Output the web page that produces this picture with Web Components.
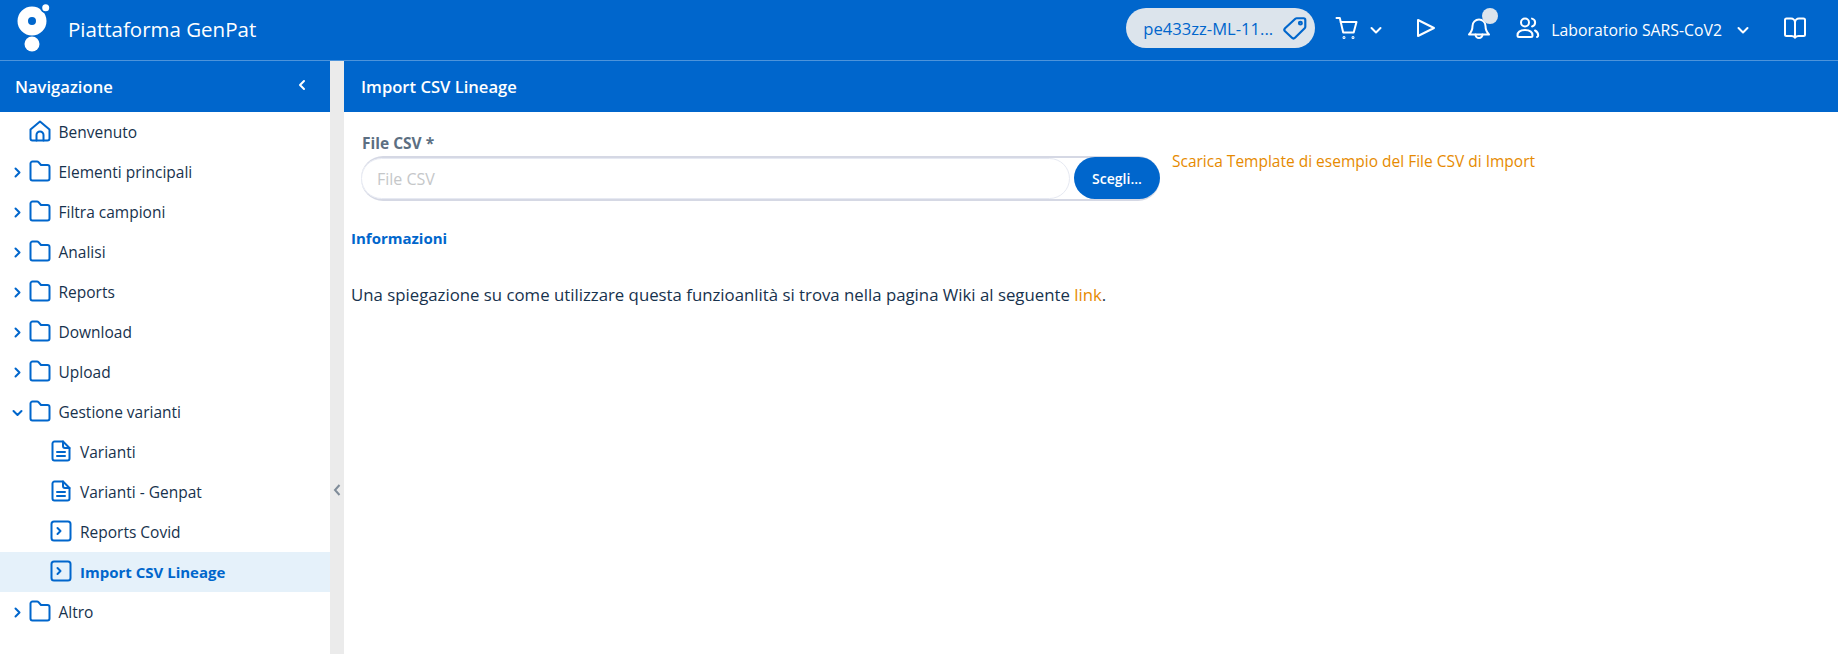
<!DOCTYPE html>
<html lang="it">
<head>
<meta charset="utf-8">
<title>Piattaforma GenPat</title>
<style>
    html, body { margin: 0; height: 100%; overflow: hidden; }
    body { font-family: "Open Sans", "Noto Sans", sans-serif; color: #17324d; }
    gp-app { height: 100vh; }
</style>
</head>
<body>
<gp-app>
    <gp-header slot="header"></gp-header>
    <gp-sidebar slot="sidebar">
        <gp-nav-item icon="home" label="Benvenuto"></gp-nav-item>
        <gp-nav-item icon="folder" toggle="closed" label="Elementi principali"></gp-nav-item>
        <gp-nav-item icon="folder" toggle="closed" label="Filtra campioni"></gp-nav-item>
        <gp-nav-item icon="folder" toggle="closed" label="Analisi"></gp-nav-item>
        <gp-nav-item icon="folder" toggle="closed" label="Reports"></gp-nav-item>
        <gp-nav-item icon="folder" toggle="closed" label="Download"></gp-nav-item>
        <gp-nav-item icon="folder" toggle="closed" label="Upload"></gp-nav-item>
        <gp-nav-item icon="folder" toggle="open" label="Gestione varianti"></gp-nav-item>
        <gp-nav-item icon="file" child label="Varianti"></gp-nav-item>
        <gp-nav-item icon="file" child label="Varianti - Genpat"></gp-nav-item>
        <gp-nav-item icon="code" child label="Reports Covid"></gp-nav-item>
        <gp-nav-item icon="code" child active label="Import CSV Lineage"></gp-nav-item>
        <gp-nav-item icon="folder" toggle="closed" label="Altro"></gp-nav-item>
    </gp-sidebar>
    <gp-splitter slot="splitter"></gp-splitter>
    <gp-import-page slot="main"></gp-import-page>
</gp-app>

<script>
const ICONS = {
    home: '<path d="M1.500 9.500 11 1.500l9.500 8v9a2 2 0 0 1-2 2h-15a2 2 0 0 1-2-2Z"/><path d="M7.500 20.500V15a3.500 3.500 0 0 1 7 0v5.500"/>',
    folder: '<path d="M1.500 3.500a2 2 0 0 1 2-2h4.500a2 2 0 0 1 1.500.7L12 5h6.500a2 2 0 0 1 2 2v11.500a2 2 0 0 1-2 2h-15a2 2 0 0 1-2-2Z"/>',
    file: '<path d="M2.500 3.500a2 2 0 0 1 2-2H13l6.500 6.500v10.500a2 2 0 0 1-2 2h-13a2 2 0 0 1-2-2Z"/><path d="M13 1.500V6a2 2 0 0 0 2 2h4.500"/><path d="M7 12h8M7 16h8"/>',
    code: '<rect x="1.500" y="1.500" width="19" height="19" rx="2.500"/><path d="m7.500 8 3 3-3 3"/>'
};

class GpApp extends HTMLElement {
    constructor() {
        super();
        this.attachShadow({ mode: 'open' }).innerHTML = `
            <style>
                :host { display: grid; grid-template-columns: 330px 14px 1fr; grid-template-rows: 61px 1fr; }
                .top { grid-column: 1 / -1; }
            </style>
            <div class="top"><slot name="header"></slot></div>
            <slot name="sidebar"></slot>
            <slot name="splitter"></slot>
            <slot name="main"></slot>
        `;
    }
}

class GpHeader extends HTMLElement {
    constructor() {
        super();
        this.attachShadow({ mode: 'open' }).innerHTML = `
            <style>
                :host { display: flex; align-items: center; height: 61px; box-sizing: border-box; background: #0066cc; color: #fff; border-bottom: 1px solid #4d94db; }
                .logo { margin-left: 15px; width: 36px; height: 52px; flex: none; }
                .brand { margin-left: 17px; font-size: 20.500px; flex: 1; margin-bottom: 2px; }
                .tag { display: flex; align-items: center; width: 189px; height: 40px; box-sizing: border-box; padding-left: 17px; background: #dce4ec; color: #0066cc; border-radius: 20px; font-size: 16.600px; margin-bottom: 4px; }
                .tag span { flex: 1; }
                svg.i { fill: none; stroke: currentColor; stroke-width: 2; stroke-linecap: round; stroke-linejoin: round; flex: none; margin-bottom: 4px; }
                .tag svg.i { margin: 0 7px 0 0; }
                .cart { margin-left: 20px; }
                svg.caret { margin-left: 11px; margin-bottom: 1px; }
                .play { margin-left: 33px; }
                .bell-wrap { position: relative; display: flex; margin-left: 30px; }
                .dot { position: absolute; top: -8px; right: -7px; width: 16px; height: 16px; border-radius: 50%; background: #dce4ec; }
                .people { margin-left: 25px; }
                .lab { margin-left: 11px; font-size: 15.800px; margin-bottom: 1px; }
                svg.lab-caret { margin-left: 15px; margin-bottom: 1px; }
                .book { margin-left: 34px; margin-right: 31px; }
            </style>
            <svg class="logo" viewBox="0 0 36 52">
                <circle cx="17" cy="17" r="9.250" fill="none" stroke="#fff" stroke-width="10.500"/>
                <circle cx="30.700" cy="3.700" r="5.500" fill="#0066cc"/>
                <circle cx="30.700" cy="3.700" r="3.500" fill="#fff"/>
                <circle cx="17" cy="40" r="7.500" fill="#fff"/>
            </svg>
            <div class="brand">Piattaforma GenPat</div>
            <div class="tag"><span>pe433zz-ML-11...</span>
                <svg class="i" width="26" height="26" viewBox="0 0 24 24"><path d="M2.800 12.200 12.300 3.500a2 2 0 0 1 1.400-.5H20a1.500 1.500 0 0 1 1.500 1.500v6.300a2 2 0 0 1-.6 1.400L12 21a2 2 0 0 1-2.800 0l-6.400-6a2 2 0 0 1 0-2.800Z"/><circle cx="17" cy="7.500" r="1.300"/></svg>
            </div>
            <svg class="i cart" width="24" height="24" viewBox="0 0 24 24"><path d="M1.500 2h3.300l3.400 14.500h10.500L21.500 6H5.500"/><circle cx="9" cy="21.500" r=".5"/><circle cx="18" cy="21.500" r=".5"/></svg>
            <svg class="i caret" width="12" height="12" viewBox="0 0 12 12"><path d="m1.500 4 4.500 4.500L10.500 4"/></svg>
            <svg class="i play" width="22" height="22" viewBox="0 0 22 22"><path d="M3 3v16l16-8Z"/></svg>
            <div class="bell-wrap">
                <svg class="i" width="24" height="24" viewBox="0 0 24 24"><path d="M2 18.500c2.500-2.500 3.500-5 3.500-8.500a6.500 6.500 0 0 1 13 0c0 3.500 1 6 3.500 8.500Z"/><path d="M8.500 18.500a3.500 3.500 0 0 0 7 0"/></svg>
                <div class="dot"></div>
            </div>
            <svg class="i people" width="24" height="24" viewBox="0 0 24 24"><circle cx="9" cy="6.500" r="4"/><path d="M1.500 19.500c0-3.500 3-5.500 7.500-5.500s7.500 2 7.500 5.500c0 1-.5 1.500-1.500 1.500H3c-1 0-1.500-.5-1.500-1.500Z"/><path d="M16 2.600a4 4 0 0 1 0 7.800M19 14.500c2 1 3.200 2.800 3.200 5 0 .8-.4 1.300-1.200 1.500"/></svg>
            <div class="lab">Laboratorio SARS-CoV2</div>
            <svg class="i lab-caret" width="12" height="12" viewBox="0 0 12 12"><path d="m1.500 4 4.500 4.500L10.500 4"/></svg>
            <svg class="i book" width="24" height="24" viewBox="0 0 24 24"><path d="M12 21.500c-1-1-2-1.500-3.500-1.500H3.500a1.500 1.500 0 0 1-1.500-1.500V4a1.500 1.500 0 0 1 1.500-1.500h4.500a4 4 0 0 1 4 4 4 4 0 0 1 4-4h4.500A1.500 1.500 0 0 1 22 4v14.500a1.500 1.500 0 0 1-1.500 1.500h-5c-1.500 0-2.500.5-3.500 1.500Z"/><path d="M12 6.500v15"/></svg>
        `;
    }
}

class GpPanelHeader extends HTMLElement {
    constructor() {
        super();
        this.attachShadow({ mode: 'open' }).innerHTML = `
            <style>
                :host { display: flex; align-items: center; height: 51px; padding: 0 22px 0 15px; background: #0066cc; color: #fff; font-size: 16.600px; font-weight: 600; }
                div { flex: 1; }
            </style>
            <div><slot></slot></div>
            <slot name="action"></slot>
        `;
    }
}

class GpSidebar extends HTMLElement {
    constructor() {
        super();
        this.attachShadow({ mode: 'open' }).innerHTML = `
            <style>
                :host { display: block; background: #fff; overflow: hidden; }
                svg { fill: none; stroke: #fff; stroke-width: 2; stroke-linecap: round; stroke-linejoin: round; margin-top: -3px; }
            </style>
            <gp-panel-header>Navigazione
                <svg slot="action" width="12" height="12" viewBox="0 0 12 12"><path d="M8 2 4 6l4 4"/></svg>
            </gp-panel-header>
            <slot></slot>
        `;
    }
}

class GpNavItem extends HTMLElement {
    constructor() {
        super();
        const toggle = this.getAttribute('toggle');
        const chevron = toggle === 'open' ? 'm2.500 5 4 4 4-4' : 'm4.500 2.500 4 4-4 4';
        this.attachShadow({ mode: 'open' }).innerHTML = `
            <style>
                :host { display: flex; align-items: center; height: 40px; padding-left: 11px; font-size: 15.500px; color: #17324d; }
                :host([child]) { padding-left: 50px; }
                :host([active]) { background: #e5f1fa; color: #0066cc; font-weight: 700; font-size: 15px; }
                svg { fill: none; stroke: #0066cc; stroke-linecap: round; stroke-linejoin: round; flex: none; }
                .chev { width: 13px; height: 13px; stroke-width: 2; visibility: ${toggle ? 'visible' : 'hidden'}; }
                :host([child]) .chev { display: none; }
                .icon { width: 22px; height: 22px; margin: 0 0 3px 5px; stroke-width: 2; }
                :host([child]) .icon { margin-left: 0; }
                .label { margin-left: 7.500px; }
                :host([child]) .label { margin-left: 8px; }
            </style>
            <svg class="chev" viewBox="0 0 13 13"><path d="${chevron}"/></svg>
            <svg class="icon" viewBox="0 0 22 22">${ICONS[this.getAttribute('icon')]}</svg>
            <span class="label">${this.getAttribute('label')}</span>
        `;
    }
}

class GpSplitter extends HTMLElement {
    constructor() {
        super();
        this.attachShadow({ mode: 'open' }).innerHTML = `
            <style>
                :host { display: flex; align-items: flex-start; justify-content: center; background: #ebebeb; padding-top: 422px; }
                svg { fill: none; stroke: #7f8c99; stroke-width: 2; }
            </style>
            <svg width="10" height="14" viewBox="0 0 10 14"><path d="M7.500 2 3 7l4.500 5"/></svg>
        `;
    }
}

class GpFileInput extends HTMLElement {
    constructor() {
        super();
        this.attachShadow({ mode: 'open' }).innerHTML = `
            <style>
                :host { display: block; width: 799px; }
                label { display: block; font-size: 15.500px; font-weight: 700; color: #5c6f82; line-height: 20px; margin: 0 0 3px 1px; }
                .box { display: flex; height: 45px; box-sizing: border-box; border: 1px solid #d5d8e4; border-width: 2px 0; border-radius: 22px; }
                .field { flex: 1; box-sizing: border-box; display: flex; align-items: center; padding-left: 15px; color: #c5c7c9; font-size: 16px; border: 1px solid #e6e9f2; border-radius: 22px; }
                .btn { width: 86px; margin-left: 4px; display: flex; align-items: center; justify-content: center; background: #0066cc; color: #fff; font-size: 14px; font-weight: 600; border-radius: 21px; margin-top: -1px; }
            </style>
            <label>File CSV *</label>
            <div class="box">
                <div class="field">File CSV</div>
                <div class="btn">Scegli...</div>
            </div>
        `;
    }
}

class GpImportPage extends HTMLElement {
    constructor() {
        super();
        this.attachShadow({ mode: 'open' }).innerHTML = `
            <style>
                :host { display: block; background: #fff; }
                gp-panel-header { padding-left: 17px; }
                .body { padding: 21px 7px; }
                .row { display: flex; padding-left: 10px; }
                a { color: #e68a00; text-decoration: none; }
                .row a { margin: 17px 0 0 12px; font-size: 15.500px; line-height: 22px; }
                h2 { margin: 25px 0 0; color: #0066cc; font-size: 15px; font-weight: 700; line-height: 24px; }
                p { margin: 33px 0 0; font-size: 16.800px; line-height: 24px; color: #17324d; }
            </style>
            <gp-panel-header>Import CSV Lineage</gp-panel-header>
            <div class="body">
                <div class="row">
                    <gp-file-input></gp-file-input>
                    <a>Scarica Template di esempio del File CSV di Import</a>
                </div>
                <h2>Informazioni</h2>
                <p>Una spiegazione su come utilizzare questa funzioanlità si trova nella pagina Wiki al seguente <a>link</a>.</p>
            </div>
        `;
    }
}

customElements.define('gp-app', GpApp);
customElements.define('gp-header', GpHeader);
customElements.define('gp-panel-header', GpPanelHeader);
customElements.define('gp-sidebar', GpSidebar);
customElements.define('gp-nav-item', GpNavItem);
customElements.define('gp-splitter', GpSplitter);
customElements.define('gp-file-input', GpFileInput);
customElements.define('gp-import-page', GpImportPage);
</script>
</body>
</html>
